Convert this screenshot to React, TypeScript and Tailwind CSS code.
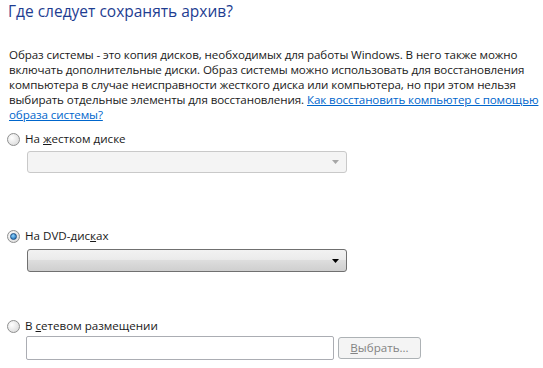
import React from "react";

function Radio({ checked }: { checked?: boolean }) {
  return (
    <span className="relative inline-block w-[13px] h-[13px] rounded-full border border-[#8e8f8f] bg-[radial-gradient(circle_at_35%_35%,#ffffff,#d4d4d4)] shrink-0">
      {checked && (
        <span className="absolute left-[2px] top-[2px] w-[7px] h-[7px] rounded-full bg-[radial-gradient(circle_at_40%_35%,#8fd3ff,#0a5fa8)] border border-[#1b4f86]" />
      )}
    </span>
  );
}

function Arrow({ color }: { color: string }) {
  return (
    <svg width="7" height="4" viewBox="0 0 7 4">
      <path d="M0 0 H7 L3.5 4 Z" fill={color} />
    </svg>
  );
}

export default function App() {
  return (
    <div
      className="w-[543px] h-[368px] bg-white overflow-hidden text-[12px] text-[#1a1a1a]"
      style={{ fontFamily: '"Open Sans", "Noto Sans", sans-serif' }}
    >
      <div className="pl-[8px] pt-[1px] text-[15.5px] leading-[20px] text-[#1e3d91]">
        Где следует сохранять архив?
      </div>
      <div className="pl-[9px] mt-[26px] leading-[15px] text-[11.6px] tracking-[-0.1px]">
        <div>Образ системы - это копия дисков, необходимых для работы Windows. В него также можно</div>
        <div>включать дополнительные диски. Образ системы можно использовать для восстановления</div>
        <div>компьютера в случае неисправности жесткого диска или компьютера, но при этом нельзя</div>
        <div>
          выбирать отдельные элементы для восстановления.{" "}
          <span className="text-[#0066cc] underline">Как восстановить компьютер с помощью</span>
        </div>
        <div>
          <span className="text-[#0066cc] underline">образа системы?</span>
        </div>
      </div>

      <div className="flex items-center gap-[5px] pl-[7px] mt-[9px] h-[16px] text-[11.6px]">
        <Radio />
        <span>
          На <span className="underline">ж</span>естком диске
        </span>
      </div>
      <div className="ml-[27px] mt-[4px] w-[320px] h-[22px] rounded-[3px] border border-[#c9c9c9] bg-[#f4f4f4] flex items-center justify-end pr-[7px]">
        <Arrow color="#a6a6a6" />
      </div>

      <div className="flex items-center gap-[5px] pl-[7px] mt-[55px] h-[16px] text-[11.6px]">
        <Radio checked />
        <span>
          На DVD-дис<span className="underline">к</span>ах
        </span>
      </div>
      <div className="ml-[27px] mt-[5px] w-[320px] h-[23px] rounded-[3px] border border-[#707070] bg-[linear-gradient(#f2f2f2,#ebebeb_45%,#dddddd_50%,#cfcfcf)] flex items-center justify-end pr-[7px]">
        <Arrow color="#000000" />
      </div>

      <div className="flex items-center gap-[5px] pl-[7px] mt-[46px] h-[16px] text-[11.6px]">
        <Radio />
        <span>
          В <span className="underline">с</span>етевом размещении
        </span>
      </div>
      <div className="flex items-center gap-[4px] ml-[26px] mt-[2px]">
        <div className="w-[308px] h-[24px] border border-[#abadb3] rounded-[2px] bg-white" />
        <div className="w-[83px] h-[22px] border border-[#adb2b5] rounded-[3px] bg-[#f4f4f4] flex items-center justify-center text-[11.6px] text-[#838383]">
          <span>
            <span className="underline">В</span>ыбрать...
          </span>
        </div>
      </div>
    </div>
  );
}
